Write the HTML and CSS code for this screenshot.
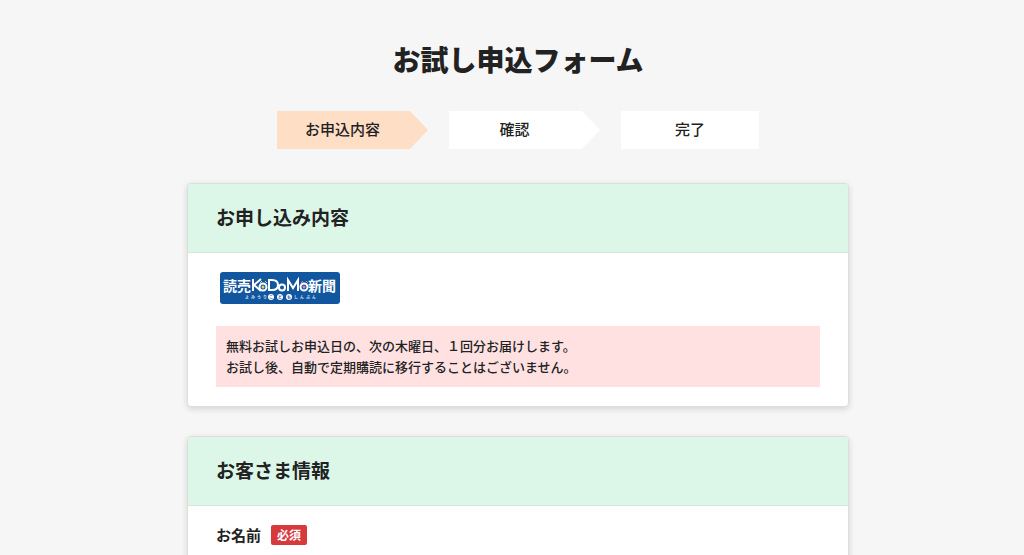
FILE: index.html
```html
<!DOCTYPE html>
<html lang="ja">
<head>
<meta charset="utf-8">
<meta name="viewport" content="width=device-width, initial-scale=1">
<title>お試し申込フォーム</title>
<link rel="stylesheet" href="styles.css">
</head>
<body>
<main class="page">
  <h1 class="title">お試し申込フォーム</h1>
  <ol class="steps">
    <li class="step step-arrow step-current" aria-current="step">お申込内容</li>
    <li class="step step-arrow">確認</li>
    <li class="step step-last">完了</li>
  </ol>
  <section class="card">
    <h2 class="card-head">お申し込み内容</h2>
    <div class="card-body">
      <svg class="logo" viewBox="0 0 120 32" role="img" aria-label="読売KoDoMo新聞">
        <rect width="120" height="32" rx="3" fill="#11569f"/>
        <g class="logo-text">
          <text x="3" y="19">読売</text>
          <text x="88" y="19">新聞</text>
        </g>
        <g fill="none" stroke="#fff" stroke-width="2">
          <path d="M33 7v12M41 7l-7 6 7 6"/>
          <circle cx="43" cy="15" r="3.5"/>
          <path d="M49 8h3q6 0 6 5t-6 5h-3z"/>
          <circle cx="62" cy="15.500" r="3"/>
          <path d="M68 19V8l5 8 5-8v11"/>
          <circle cx="84" cy="15" r="3.500"/>
        </g>
        <circle cx="43" cy="15" r="1.500" fill="#d5d86a"/>
        <circle cx="84" cy="15" r="1.500" fill="#e879ad"/>
        <path d="M40 11l2-2M45 9l2 2" stroke="#e9d66b"/>
        <path d="M81 11l2-2M86 9l2 2" stroke="#e879ad"/>
        <g fill="#fff">
          <circle cx="51" cy="25" r="3"/>
          <circle cx="60" cy="25" r="3"/>
          <circle cx="69" cy="25" r="3"/>
        </g>
        <g class="logo-kana">
          <text x="25 31 37 43" y="27">よみうり</text>
          <text x="74 80 86 92" y="27">しんぶん</text>
        </g>
        <text class="logo-kana logo-kana-dark" x="49 58 67" y="27">こども</text>
      </svg>
      <p class="notice">無料お試しお申込日の、次の木曜日、１回分お届けします。<br>お試し後、自動で定期購読に移行することはございません。</p>
    </div>
  </section>
  <section class="card">
    <h2 class="card-head">お客さま情報</h2>
    <div class="card-body">
      <div class="field-label">お名前<span class="badge">必須</span></div>
    </div>
  </section>
</main>
</body>
</html>
```
FILE: styles.css
```css
* {
  box-sizing: border-box;
}

body {
  margin: 0;
  padding-left: 12px;
  background: #f6f6f6;
  color: #222;
  font-family: "Noto Sans CJK JP", sans-serif;
}

/* Keeps the layout free of a scrollbar gutter */
html {
  scrollbar-width: none;
}

.page {
  max-width: 686px;
  margin: 0 auto;
  padding: 39px 12px 40px;
}

.title {
  margin: 0;
  font-size: 28px;
  line-height: 40px;
  font-weight: 900;
  text-align: center;
}

.steps {
  display: flex;
  justify-content: center;
  gap: 21px;
  margin: 32px 0 34px;
  padding: 0;
  list-style: none;
}

.step {
  flex: 0 1 151px;
  padding: 0 20px 2px 0;
  background: #fff;
  font-size: 15px;
  line-height: 36px;
  font-weight: 500;
  text-align: center;
}

.step-arrow {
  clip-path: polygon(0 0, calc(100% - 18px) 0, 100% 50%, calc(100% - 18px) 100%, 0 100%);
}

.step-current {
  background: #ffdec6;
}

.step-last {
  flex-basis: 138px;
  padding-right: 0;
}

.card {
  margin-bottom: 29px;
  border: 1px solid #dcdfdd;
  border-radius: 4px;
  background: #fff;
  box-shadow: 0 2px 6px rgba(0, 0, 0, 0.14);
  overflow: hidden;
}

.card-head {
  margin: 0;
  padding: 19px 28px 21px;
  border-bottom: 1px solid #d3e8dd;
  background: #dcf7e8;
  font-size: 19px;
  line-height: 28px;
  font-weight: 700;
}

.card-body {
  padding: 19px 28px;
}

.logo {
  display: block;
  width: 120px;
  height: 32px;
  margin-left: 4px;
}

.logo-text {
  fill: #fff;
  font-size: 14px;
  font-weight: 700;
}

.logo-kana {
  fill: #d5e6f7;
  font-size: 4px;
  font-weight: 700;
}

.logo-kana-dark {
  fill: #11569f;
}

.notice {
  margin: 22px 0 0;
  padding: 9px 10px 10px;
  background: #ffe1e2;
  font-size: 13px;
  line-height: 21px;
  font-weight: 500;
}

.field-label {
  display: flex;
  align-items: center;
  gap: 10px;
  font-size: 15px;
  line-height: 20px;
  font-weight: 700;
}

.badge {
  padding: 0 6px;
  border-radius: 2px;
  background: #d63a3c;
  color: #fff;
  font-size: 12px;
}
```
